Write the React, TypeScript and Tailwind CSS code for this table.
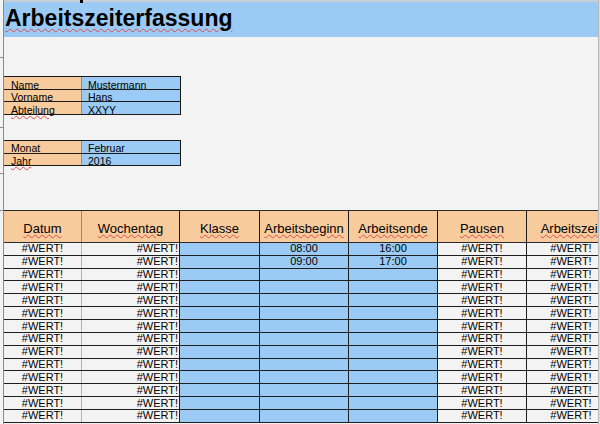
import React from "react";

const SQ = "underline decoration-wavy decoration-[#dd4b4b] decoration-1 underline-offset-[1px]";
const BLUE = "bg-[#9bcbf4]";
const ORANGE = "bg-[#f8cb9d]";

const rows = Array.from({ length: 14 }, (_, i) => ({
  b: i === 0 ? "08:00" : i === 1 ? "09:00" : "",
  e: i === 0 ? "16:00" : i === 1 ? "17:00" : "",
}));

function InfoRow({ label, value, sq = true, sqv = true }: { label: string; value: string; sq?: boolean; sqv?: boolean }) {
  return (
    <div className="flex h-[12.67px] border-b border-[#1a1a1a] text-[10.5px] leading-[12px]">
      <div className={`w-[78px] shrink-0 ${ORANGE} border-r border-r-[#8e8e8e] pl-[7px] pt-[1.5px]`}>
        <span className={sq ? SQ : ""}>{label}</span>
      </div>
      <div className={`w-[99px] shrink-0 ${BLUE} border-r border-r-[#1a1a1a] pl-[6px] pt-[1.5px]`}>
        <span className={sqv ? SQ : ""}>{value}</span>
      </div>
    </div>
  );
}

export default function App() {
  return (
    <div className="relative w-[600px] h-[424px] overflow-hidden bg-[#f3f3f3] text-black font-['Liberation_Sans',Arial,sans-serif]">
      <div className="flex h-[424px]">
        <div className="w-[3px] shrink-0" />
        <div className="w-px shrink-0 bg-[#8a8a8a]" />
        <div className="w-[594px] shrink-0 flex flex-col overflow-hidden">
          <div className="h-[2px] shrink-0 bg-[#c8ced6]" />
          {/* title band */}
          <div className={`h-[35px] shrink-0 ${BLUE} pl-[1px] pt-[5px]`}>
            <span className={`text-[23px] leading-[23px] font-bold ${SQ} underline-offset-[2px]`}>Arbeitszeiterfassung</span>
          </div>

          {/* info table */}
          <div className="mt-[39px] w-[177px] border-t border-[#1a1a1a] shrink-0">
            <InfoRow label="Name" value="Mustermann" />
            <InfoRow label="Vorname" value="Hans" />
            <InfoRow label="Abteilung" value="XXYY" sqv={false} />
          </div>

          <div className="mt-[25px] w-[177px] border-t border-[#1a1a1a] shrink-0">
            <InfoRow label="Monat" value="Februar" />
            <InfoRow label="Jahr" value="2016" sqv={false} />
          </div>

          {/* header */}
          <div className={`mt-[43.66px] flex h-[33px] shrink-0 border-t border-b border-[#2a2a2a] ${ORANGE} text-[13px] leading-[15px]`}>
            <div className="w-[78px] shrink-0 text-center pt-[10px] border-r border-r-[#8a8a8a]"><span className={SQ}>Datum</span></div>
            <div className="w-[98px] shrink-0 text-center pt-[10px] border-r border-r-[#1a1a1a]"><span className={SQ}>Wochentag</span></div>
            <div className="w-[80px] shrink-0 text-center pt-[10px] border-r border-r-[#1a1a1a]"><span className={SQ}>Klasse</span></div>
            <div className="w-[89px] shrink-0 text-center pt-[10px] border-r border-r-[#1a1a1a]"><span className={SQ}>Arbeitsbeginn</span></div>
            <div className="w-[89px] shrink-0 text-center pt-[10px] border-r border-r-[#1a1a1a]"><span className={SQ}>Arbeitsende</span></div>
            <div className="w-[89px] shrink-0 text-center pt-[10px] border-r border-r-[#1a1a1a]"><span className={SQ}>Pausen</span></div>
            <div className="w-[89px] shrink-0 text-center pt-[10px] border-r border-r-[#1a1a1a] whitespace-nowrap"><span className={SQ}>Arbeitszeit</span></div>
          </div>

          {/* data rows */}
          {rows.map((r, i) => (
            <div key={i} className="flex h-[12.85px] shrink-0 border-b border-[#1e1e1e] text-[11px] leading-[11.85px]">
              <div className="w-[78px] shrink-0 text-center pt-[0.5px] border-r border-r-[#b4b4b4]">#WERT!</div>
              <div className="w-[98px] shrink-0 text-right pr-[1px] pt-[0.5px] border-r border-r-[#1e1e1e]">#WERT!</div>
              <div className={`w-[80px] shrink-0 ${BLUE} border-r border-r-[#1e1e1e]`} />
              <div className={`w-[89px] shrink-0 ${BLUE} text-center pt-[0.5px] border-r border-r-[#1e1e1e]`}>{r.b}</div>
              <div className={`w-[89px] shrink-0 ${BLUE} text-center pt-[0.5px] border-r border-r-[#1e1e1e]`}>{r.e}</div>
              <div className="w-[89px] shrink-0 text-center pt-[0.5px] border-r border-r-[#1e1e1e]">#WERT!</div>
              <div className="w-[89px] shrink-0 text-center pt-[0.5px] border-r border-r-[#1e1e1e]">#WERT!</div>
            </div>
          ))}
        </div>
        <div className="w-px shrink-0 bg-[#b8b8b8]" />
        <div className="w-px shrink-0 bg-[#dcdcdc]" />
      </div>

      {/* decorations */}
      <div className="absolute left-[80px] top-0 w-[3px] h-[3px] bg-black" />
      <div className="absolute left-0 top-[57px] w-[3px] h-px bg-[#8a8a8a]" />
      <div className="absolute left-0 top-[127px] w-[3px] h-px bg-[#8a8a8a]" />
      <div className="absolute left-0 top-[173px] w-[3px] h-px bg-[#8a8a8a]" />
      <div className="absolute left-0 top-[210px] w-[3px] h-px bg-[#8a8a8a]" />
    </div>
  );
}
